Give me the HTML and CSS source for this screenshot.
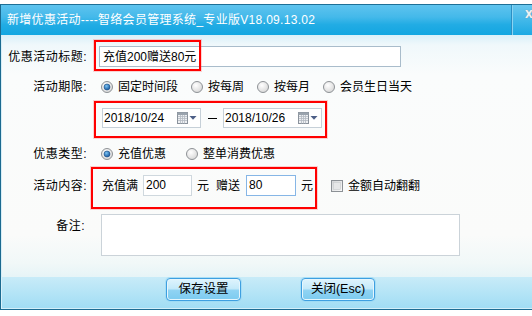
FILE: index.html
```html
<!DOCTYPE html>
<html lang="zh-CN">
<head>
<meta charset="utf-8">
<title>新增优惠活动</title>
<link rel="stylesheet" href="styles.css">
</head>
<body>
<div class="window">
  <div class="titlebar">
    <span class="title">新增优惠活动----智络会员管理系统_专业版V18.09.13.02</span>
    <div class="closebox"><span class="x">X</span></div>
  </div>
  <div class="content">
    <div class="row row-title">
      <span class="lbl">优惠活动标题:</span>
      <div class="field title-field">充值200赠送80元</div>
      <div class="mark mark-title"></div>
    </div>
    <div class="row row-period">
      <span class="lbl">活动期限:</span>
      <div class="radios">
        <span class="opt"><svg class="radio" viewBox="0 0 12 12"><defs><radialGradient id="rg1" cx="40%" cy="35%" r="70%"><stop offset="0" stop-color="#ffffff"/><stop offset="1" stop-color="#d6d6d6"/></radialGradient><radialGradient id="dot1" cx="40%" cy="35%" r="70%"><stop offset="0" stop-color="#7cc4f4"/><stop offset="1" stop-color="#0d4f98"/></radialGradient></defs><circle cx="6" cy="6" r="5.5" fill="url(#rg1)" stroke="#8e9296"/><circle cx="6" cy="6" r="3" fill="url(#dot1)" stroke="#1d4f86" stroke-width="0.6"/></svg>固定时间段</span>
        <span class="opt"><svg class="radio" viewBox="0 0 12 12"><circle cx="6" cy="6" r="5.5" fill="url(#rg1)" stroke="#8e9296"/></svg>按每周</span>
        <span class="opt"><svg class="radio" viewBox="0 0 12 12"><circle cx="6" cy="6" r="5.5" fill="url(#rg1)" stroke="#8e9296"/></svg>按每月</span>
        <span class="opt"><svg class="radio" viewBox="0 0 12 12"><circle cx="6" cy="6" r="5.5" fill="url(#rg1)" stroke="#8e9296"/></svg>会员生日当天</span>
      </div>
    </div>
    <div class="row row-dates">
      <div class="field date">
        <span class="dtext">2018/10/24</span>
        <svg class="cal" viewBox="0 0 20 12"><rect x="0.5" y="0.5" width="10" height="11" fill="#eef0f3" stroke="#8a929c"/><path d="M1 4.5h9M1 6.5h9M1 8.5h9M3.5 3v8.5M5.5 3v8.5M7.5 3v8.5" stroke="#b4bac2" stroke-width="0.8"/><rect x="0.5" y="0.5" width="10" height="2.5" fill="#9aa3ad"/><path d="M12.5 4h7l-3.5 3.8z" fill="#4d5f87"/></svg>
      </div>
      <span class="dash"></span>
      <div class="field date">
        <span class="dtext">2018/10/26</span>
        <svg class="cal" viewBox="0 0 20 12"><rect x="0.5" y="0.5" width="10" height="11" fill="#eef0f3" stroke="#8a929c"/><path d="M1 4.5h9M1 6.5h9M1 8.5h9M3.5 3v8.5M5.5 3v8.5M7.5 3v8.5" stroke="#b4bac2" stroke-width="0.8"/><rect x="0.5" y="0.5" width="10" height="2.5" fill="#9aa3ad"/><path d="M12.5 4h7l-3.5 3.8z" fill="#4d5f87"/></svg>
      </div>
      <div class="mark mark-dates"></div>
    </div>
    <div class="row row-type">
      <span class="lbl">优惠类型:</span>
      <div class="radios radios-wide">
        <span class="opt"><svg class="radio" viewBox="0 0 12 12"><circle cx="6" cy="6" r="5.5" fill="url(#rg1)" stroke="#8e9296"/><circle cx="6" cy="6" r="3" fill="url(#dot1)" stroke="#1d4f86" stroke-width="0.6"/></svg>充值优惠</span>
        <span class="opt"><svg class="radio" viewBox="0 0 12 12"><circle cx="6" cy="6" r="5.5" fill="url(#rg1)" stroke="#8e9296"/></svg>整单消费优惠</span>
      </div>
    </div>
    <div class="row row-content">
      <span class="lbl">活动内容:</span>
      <span class="txt first">充值满</span>
      <div class="field num">200</div>
      <span class="txt">元</span>
      <span class="txt gift">赠送</span>
      <div class="field num focus">80</div>
      <span class="txt">元</span>
      <span class="check"><svg class="box" viewBox="0 0 12 12"><defs><linearGradient id="cb" x1="0" y1="0" x2="1" y2="1"><stop offset="0" stop-color="#d2d4d6"/><stop offset="1" stop-color="#fbfbfb"/></linearGradient></defs><rect x="0.5" y="0.5" width="11" height="11" fill="url(#cb)" stroke="#8c9196"/><rect x="2.5" y="2.5" width="7" height="7" fill="#e6e7e8" stroke="#c9cbcd" stroke-width="0.6"/></svg>金额自动翻翻</span>
      <div class="mark mark-content"></div>
    </div>
    <div class="row row-note">
      <span class="lbl note-lbl">备注:</span>
      <div class="field note"></div>
    </div>
  </div>
  <div class="footer">
    <button class="btn">保存设置</button>
    <button class="btn">关闭(Esc)</button>
  </div>
</div>
</body>
</html>
```
FILE: styles.css
```css
* { box-sizing: border-box; }
html, body { margin: 0; padding: 0; overflow: hidden; background: #ffffff; }
body {
  font-family: "Liberation Sans", "Noto Sans CJK SC", sans-serif;
  font-size: 12px;
  color: #000;
  line-height: 1;
}
.window {
  margin-top: 4px;
  width: 532px;
  border-top: 1px solid #1d6f96;
  border-left: 1px solid #1b6a90;
}
.titlebar {
  height: 30px;
  display: flex;
  align-items: center;
  background: linear-gradient(#5ec3ee 0%, #44b9ea 40%, #22ace4 65%, #12a6e1 100%);
  color: #ffffff;
}
.title {
  flex: 1;
  padding-left: 6px;
  font-size: 12px;
  letter-spacing: 0.3px;
  margin-top: -1px;
  white-space: nowrap;
}
.closebox {
  width: 21px;
  flex: none;
  align-self: stretch;
  overflow: hidden;
  border-left: 1px solid #2b8fc4;
  box-shadow: inset 1px 0 0 #8ad4f2;
  background: linear-gradient(#6cc8ef, #3ab5e8 60%, #1ca9e3);
  padding: 3px 0 0 13px;
  white-space: nowrap;
}
.x {
  font-family: "DejaVu Sans", sans-serif;
  font-weight: bold;
  font-size: 10px;
  color: #eef3f6;
  text-shadow: 0 0 1px #7b8a96;
}
.content {
  height: 242px;
  box-shadow: inset 1px 0 0 #d7eef7;
  background: linear-gradient(#d9f0f9 0px, #f0f8fb 10px, #fafcfc 40px, #fafbfa 200px, #f1f8f8 228px, #e6f4f7 242px);
  padding-top: 11px;
}
.row {
  display: flex;
  align-items: center;
  position: relative;
}
.lbl {
  width: 88px;
  flex: none;
  text-align: right;
  white-space: nowrap;
  letter-spacing: 0.5px;
  padding-right: 2px;
}
.field {
  background: #ffffff;
  border: 1px solid #c6d0d8;
}
.row-title { height: 21px; }
.title-field {
  margin-left: 10px;
  width: 302px;
  height: 21px;
  border-color: #a9bccb;
  display: flex;
  align-items: center;
  padding-left: 3px;
  font-size: 12px;
}
.mark {
  position: absolute;
  border: 2px solid #ff0000;
  box-shadow: 0 0 0 1px rgba(255, 80, 80, 0.25);
  pointer-events: none;
}
.mark-title { left: 93px; top: -6px; width: 107px; height: 31px; }
.row-period { margin-top: 12px; height: 16px; }
.radios { display: flex; gap: 13px; margin-left: 12px; }
.radios-wide { gap: 20px; }
.opt { display: flex; align-items: center; gap: 5px; white-space: nowrap; }
.radio { width: 12px; height: 12px; flex: none; }
.row-dates { margin-top: 13px; height: 20px; padding-left: 101px; }
.date {
  width: 99px;
  height: 20px;
  display: flex;
  align-items: center;
  padding-left: 1px;
}
.dtext { width: 73px; }
.cal { width: 20px; height: 12px; }
.dash {
  width: 9px;
  height: 1px;
  background: #000;
  margin: 0 6px 0 7px;
}
.mark-dates { left: 93px; top: -7px; width: 233px; height: 37px; }
.row-type { margin-top: 18px; height: 16px; }
.row-content { margin-top: 13px; height: 21px; }
.txt { margin-left: 5px; white-space: nowrap; }
.txt.first { margin-left: 13px; }
.txt.gift { margin-left: 7px; margin-right: 1px; }
.num {
  margin-left: 5px;
  width: 49px;
  height: 21px;
  padding: 3px 0 0 2px;
  border-color: #cfd8de;
}
.num.focus { border-color: #86b6e6; width: 50px; }
.check {
  margin-left: 18px;
  display: flex;
  align-items: center;
  gap: 5px;
  white-space: nowrap;
}
.box { width: 12px; height: 12px; }
.mark-content { left: 90px; top: -8px; width: 226px; height: 42px; }
.row-note { margin-top: 18px; align-items: flex-start; }
.note-lbl { width: 86px; padding-top: 6px; }
.note {
  margin-left: 14px;
  width: 359px;
  height: 42px;
  border-color: #cbd3d9;
}
.footer {
  height: 33px;
  border-bottom: 1px solid #1d6c94;
  box-shadow: inset 1px 0 0 #d9f1fa, inset 0 -1px 0 #d3eff9;
  background: linear-gradient(#c8ebf8, #b4e4f6 50%, #a0dcf4);
  display: flex;
  align-items: flex-start;
  padding: 1px 0 0 165px;
  gap: 60px;
}
.btn {
  width: 75px;
  height: 23px;
  padding: 0;
  border: 1px solid #3e9fe0;
  border-radius: 4px;
  box-shadow: inset 0 0 0 1px #e6f6fd, 0 0 0 1px rgba(150, 215, 245, 0.6);
  background: linear-gradient(#dff4fd 0%, #c5eafa 45%, #8fd3f3 55%, #7ccbf0 100%);
  font-family: "Liberation Sans", "Noto Sans CJK SC", sans-serif;
  font-size: 12.5px;
  color: #000;
  line-height: 1;
}
.btn + .btn { width: 74px; }
```
